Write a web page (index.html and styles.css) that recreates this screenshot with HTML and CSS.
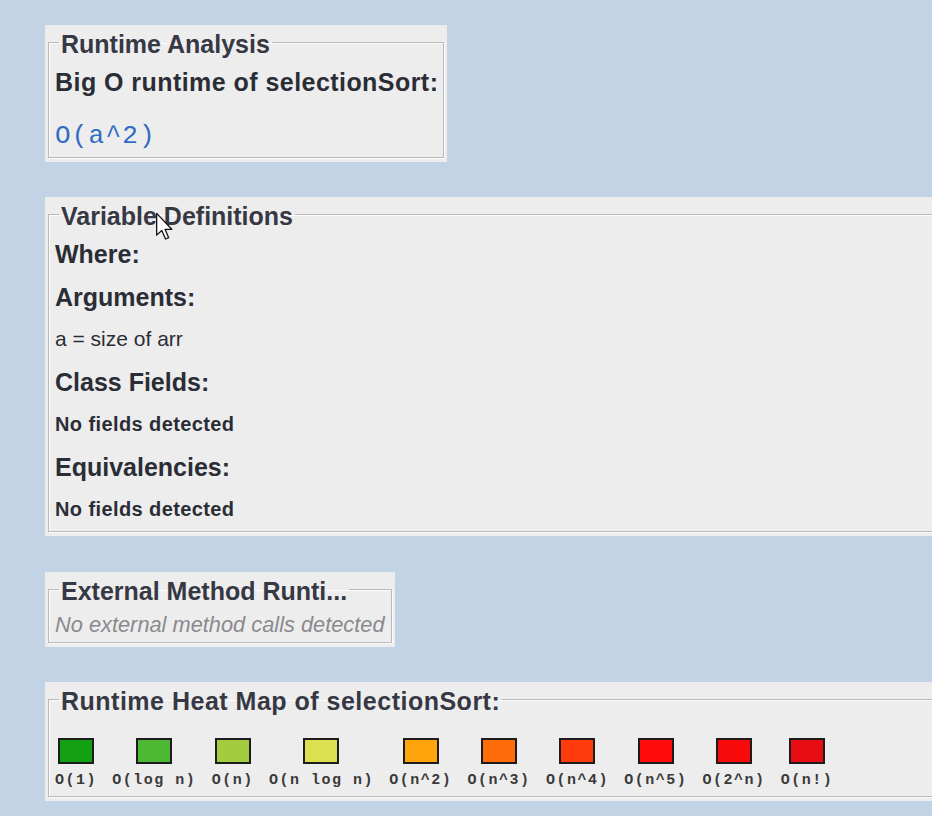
FILE: index.html
```html
<!DOCTYPE html>
<html>
<head>
<meta charset="utf-8">
<title>Runtime Analysis</title>
<link rel="stylesheet" href="styles.css">
</head>
<body>
<main class="stack">
  <section class="panel panel-analysis">
    <fieldset class="group">
      <legend class="title">Runtime Analysis</legend>
      <div class="big">Big O runtime of selectionSort:</div>
      <div class="result">O(a^2)</div>
    </fieldset>
  </section>

  <section class="panel panel-wide">
    <fieldset class="group group-vars">
      <legend class="title">Variable Definitions</legend>
      <div class="row head first">Where:</div>
      <div class="row head">Arguments:</div>
      <div class="row plain">a = size of arr</div>
      <div class="row head">Class Fields:</div>
      <div class="row note">No fields detected</div>
      <div class="row head">Equivalencies:</div>
      <div class="row note">No fields detected</div>
    </fieldset>
  </section>

  <section class="panel panel-external">
    <fieldset class="group group-external">
      <legend class="title">External Method Runti...</legend>
      <div class="empty">No external method calls detected</div>
    </fieldset>
  </section>

  <section class="panel panel-wide">
    <fieldset class="group group-heat">
      <legend class="title title-spaced">Runtime Heat Map of selectionSort:</legend>
      <div class="heat">
        <div class="cell"><span class="swatch c1"></span><span class="lbl">O(1)</span></div>
        <div class="cell"><span class="swatch c2"></span><span class="lbl">O(log n)</span></div>
        <div class="cell"><span class="swatch c3"></span><span class="lbl">O(n)</span></div>
        <div class="cell"><span class="swatch c4"></span><span class="lbl">O(n log n)</span></div>
        <div class="cell"><span class="swatch c5"></span><span class="lbl">O(n^2)</span></div>
        <div class="cell"><span class="swatch c6"></span><span class="lbl">O(n^3)</span></div>
        <div class="cell"><span class="swatch c7"></span><span class="lbl">O(n^4)</span></div>
        <div class="cell"><span class="swatch c8"></span><span class="lbl">O(n^5)</span></div>
        <div class="cell"><span class="swatch c9"></span><span class="lbl">O(2^n)</span></div>
        <div class="cell"><span class="swatch c10"></span><span class="lbl">O(n!)</span></div>
      </div>
    </fieldset>
  </section>
</main>

<svg class="cursor" width="19" height="30" viewBox="0 0 13 21" aria-hidden="true">
  <path d="M1 1 L1 16.2 L4.6 12.9 L7.2 18.9 L9.4 18 L6.9 12.1 L11.6 12.1 Z" fill="#ffffff" stroke="#111111" stroke-width="0.9" stroke-linejoin="round"/>
</svg>
</body>
</html>
```

FILE: styles.css
```css
html, body {
  margin: 0;
  padding: 0;
  overflow: hidden;
  background: #c1d3e4;
  height: 100%;
}

body {
  position: relative;
  font-family: "Liberation Sans", Arial, sans-serif;
  color: #2b2d36;
}

.stack {
  display: flex;
  flex-direction: column;
  align-items: flex-start;
  padding: 25px 0 0 45px;
}

.panel {
  background: #ededed;
  padding: 4px 3px 4px 3px;
  box-sizing: border-box;
}

.panel + .panel {
  margin-top: 35px;
}

.panel-analysis {
  width: 402px;
}

.panel-wide {
  align-self: stretch;
  margin-right: -40px;
}

.panel-external {
  width: 350px;
  margin-top: 36px !important;
}

.group {
  margin: 0;
  padding: 0 6px 6px 6px;
  border: 1px solid #b9b9b9;
  box-shadow: 1px 1px 0 #fbfbfb, inset 1px 1px 0 #fbfbfb;
  min-width: 0;
}

.title {
  margin-left: 4px;
  padding: 3px 2px 0 2px;
  font-size: 25px;
  font-weight: bold;
  line-height: 24px;
  color: #363844;
}

.title-spaced {
  letter-spacing: 0.5px;
}

.big {
  margin-top: 12px;
  font-size: 25px;
  font-weight: bold;
  line-height: 28px;
  letter-spacing: 0.45px;
  white-space: nowrap;
}

.result {
  margin-top: 25px;
  font-family: "Liberation Mono", "Courier New", monospace;
  font-size: 26px;
  letter-spacing: 1.2px;
  line-height: 30px;
  color: #2f6cc4;
}

.group-vars {
  padding-bottom: 0;
}

.row {
  line-height: 42.5px;
  white-space: nowrap;
}

.row.first {
  margin-top: 5px;
}

.head {
  font-size: 25px;
  font-weight: bold;
}

.plain {
  font-size: 21px;
}

.note {
  font-size: 20px;
  font-weight: bold;
  letter-spacing: 0.4px;
}

.group-external {
  padding-bottom: 3px;
}

.empty {
  margin-top: 8px;
  font-size: 21.8px;
  font-style: italic;
  line-height: 28px;
  color: #8a8a8e;
  white-space: nowrap;
}

.group-heat {
  padding-bottom: 7px;
}

.heat {
  display: flex;
  gap: 15.3px;
  margin-top: 25px;
}

.cell {
  display: flex;
  flex-direction: column;
  align-items: center;
}

.swatch {
  display: block;
  width: 36px;
  height: 26px;
  box-sizing: border-box;
  border: 2px solid #1c1c1c;
}

.lbl {
  margin-top: 9px;
  font-family: "Liberation Mono", "Courier New", monospace;
  font-size: 15px;
  font-weight: bold;
  letter-spacing: 1.5px;
  line-height: 16px;
  color: #3a3a3a;
  white-space: nowrap;
}

.c1 { background: #12a012; }
.c2 { background: #4cb834; }
.c3 { background: #a3cc40; }
.c4 { background: #dde04e; }
.c5 { background: #ffa40c; }
.c6 { background: #ff6c0a; }
.c7 { background: #ff3a0c; }
.c8 { background: #ff0c0a; }
.c9 { background: #f80a0a; }
.c10 { background: #e80c14; }

.cursor {
  position: absolute;
  left: 155px;
  top: 212px;
}
```
